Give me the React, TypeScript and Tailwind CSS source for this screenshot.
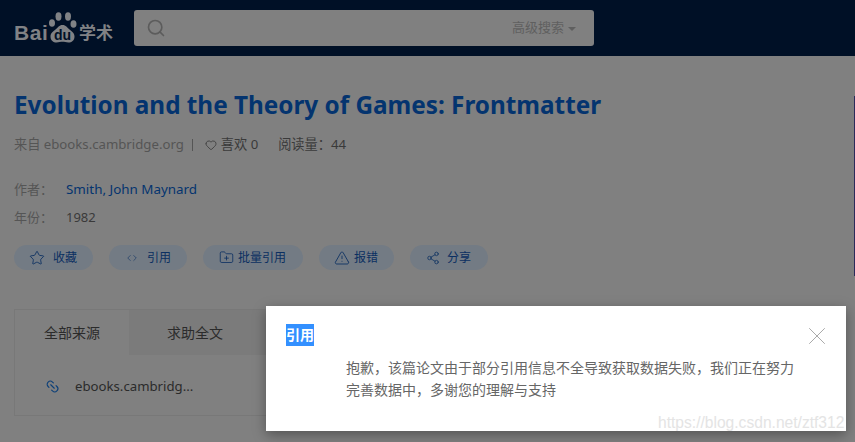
import type { ReactNode } from "react";
import { Heart, Star, ChevronLeft, ChevronRight, FolderPlus, TriangleAlert, Share2, Link2, Search, X } from "lucide-react";

function Pill({ icon, label, w, pad, gap }: { icon: ReactNode; label: string; w: string; pad: string; gap: string }) {
  return (
    <div className={`flex h-[25px] items-center rounded-full bg-[#737b84] text-[12px] text-[#0b2f61] ${w} ${pad} ${gap}`}>
      {icon}
      <span>{label}</span>
    </div>
  );
}

export default function App() {
  return (
    <div className="relative h-[442px] w-[855px] overflow-hidden bg-[#808080] font-['Noto_Sans','Noto_Sans_CJK_SC',sans-serif] text-[13px] text-[#3a3a3a]">
      <header className="flex h-[56px] items-center bg-[#001026] pl-[14px]">
        <div className="relative flex h-[36px] w-[99px] items-end pb-[3px] text-[#808285]">
          <span className="font-['Liberation_Sans',sans-serif] text-[21px] leading-[20px] font-bold tracking-[0.6px]">Bai</span>
          <svg className="absolute top-[1px] left-[34px]" width="30" height="33" viewBox="0 0 30 33" fill="#808285">
            <ellipse cx="4" cy="12" rx="3" ry="3.8" />
            <ellipse cx="10.500" cy="5.500" rx="3" ry="4.200" />
            <ellipse cx="20" cy="5.500" rx="3" ry="4.200" />
            <ellipse cx="25.500" cy="13" rx="3" ry="3.800" />
            <path d="M14.500 14c3.500 0 4.500 2.500 7 4.500 2.500 2 5 3.500 5 7 0 4-3 6-6 6-2.500 0-4-.7-6-.7s-3.500.7-6 .7c-3 0-6-2-6-6 0-3.500 2.500-5 5-7 2.500-2 3.500-4.500 7-4.500z" />
          </svg>
          <span className="absolute top-[18px] left-[40px] font-['Liberation_Sans',sans-serif] text-[14px] leading-[14px] font-bold text-[#001026]">du</span>
          <span className="ml-auto text-[17px] leading-[20px] font-bold">学术</span>
        </div>
        <div className="ml-[21px] flex h-[36px] w-[460px] items-center rounded-[3px] bg-[#808080] pr-[18px] pl-[12px]">
          <Search size={20} strokeWidth={2} className="text-[#5c5c5c]" />
          <span className="ml-auto text-[13px] text-[#5f5f5f]">高级搜索</span>
          <span className="mt-[2px] ml-[4px] h-0 w-0 border-x-[4px] border-t-[4px] border-x-transparent border-t-[#5f5f5f]" />
        </div>
      </header>

      <main className="pl-[14px]">
        <h1 className="mt-[31px] text-[24.3px] leading-[36px] font-bold whitespace-nowrap text-[#04346f]">Evolution and the Theory of Games: Frontmatter</h1>
        <div className="mt-[12px] flex h-[20px] items-center text-[13.2px]">
          <span className="text-[#555]">来自 ebooks.cambridge.org</span>
          <span className="mx-[8px] h-[12px] w-px bg-[#555]" />
          <Heart size={12} strokeWidth={1.5} className="ml-[4px] text-[#333]" />
          <span className="ml-[4px]">喜欢 0</span>
          <span className="ml-[20px]">阅读量：44</span>
        </div>
        <div className="mt-[25px] flex h-[20px] items-center">
          <span className="w-[52px] text-[#555]">作者：</span>
          <span className="pb-[2px] text-[13.4px] text-[#04346f]">Smith, John Maynard</span>
        </div>
        <div className="mt-[8px] flex h-[20px] items-center">
          <span className="w-[52px] text-[#555]">年份：</span>
          <span>1982</span>
        </div>
        <div className="mt-[17px] flex gap-[16px]">
          <Pill w="w-[79px]" pad="pl-[15px]" gap="gap-[8px]" label="收藏" icon={<Star size={16} strokeWidth={1.3} />} />
          <Pill w="w-[78px]" pad="pl-[15px]" gap="gap-[7px]" label="引用" icon={
            <span className="flex w-[16px] justify-center">
              <ChevronLeft size={14} strokeWidth={1.4} className="-mr-[2px]" />
              <ChevronRight size={14} strokeWidth={1.4} className="-ml-[2px]" />
            </span>
          } />
          <Pill w="w-[100px]" pad="pl-[16px]" gap="gap-[4px]" label="批量引用" icon={<FolderPlus size={15} strokeWidth={1.3} />} />
          <Pill w="w-[75px]" pad="pl-[15px]" gap="gap-[4px]" label="报错" icon={<TriangleAlert size={16} strokeWidth={1.3} />} />
          <Pill w="w-[78px]" pad="pl-[16px]" gap="gap-[7px]" label="分享" icon={<Share2 size={14} strokeWidth={1.3} />} />
        </div>
        <section className="mt-[39px] h-[107px] w-[400px] border border-[#787878]">
          <div className="flex h-[45px] text-[14px] text-[#2b2b2b]">
            <div className="flex w-[114px] items-center justify-center">全部来源</div>
            <div className="flex w-[132px] items-center justify-center bg-[#7b7b7b]">求助全文</div>
            <div className="w-[20px] bg-[#7b7b7b]" />
          </div>
          <div className="mt-[22px] flex items-center pl-[30px]">
            <Link2 size={15} strokeWidth={1.8} className="rotate-45 text-[#0c3f78]" />
            <span className="ml-[15px] text-[13.2px] text-[#2b2b2b]">ebooks.cambridg...</span>
          </div>
        </section>
      </main>

      <div className="absolute top-[96px] right-0 h-[180px] w-px bg-[#2a2a5a]" />

      <div className="absolute top-[306px] left-[266px] h-[125px] w-[580px] bg-white shadow-[0_4px_12px_rgba(0,0,0,0.35)]">
        <span className="absolute top-[18px] left-[20px] bg-[#3390ff] text-[14px] leading-[22px] font-bold text-white">引用</span>
        <X size={30} strokeWidth={0.8} className="absolute top-[15px] right-[14px] text-[#aaa]" />
        <p className="absolute top-[51px] left-[80px] w-[450px] text-[14px] leading-[22px] text-[#666]">
          抱歉，该篇论文由于部分引用信息不全导致获取数据失败，我们正在努力完善数据中，多谢您的理解与支持
        </p>
      </div>
      <span className="absolute top-[414px] left-[658px] font-['Liberation_Sans',sans-serif] text-[15.6px] leading-[18px] whitespace-nowrap text-[#e4e4e4]">https://blog.csdn.net/ztf312</span>
    </div>
  );
}
